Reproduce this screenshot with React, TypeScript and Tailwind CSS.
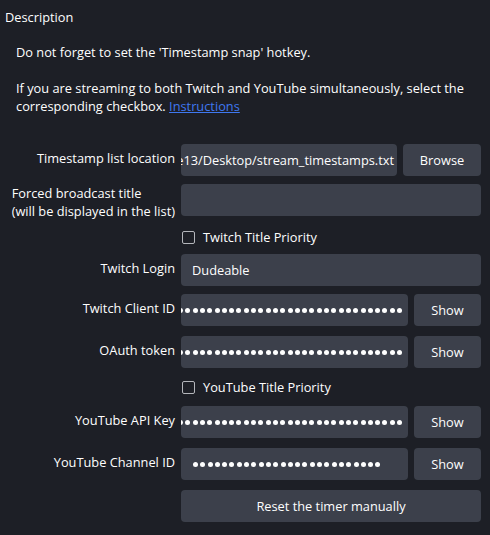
const dots = (n: number) =>
  Array.from({ length: n }, (_, i) => (
    <span key={i} className="h-[5px] w-[5px] shrink-0 rounded-full bg-[#fefefe]" />
  ));

function Label({ children }: { children: React.ReactNode }) {
  return <div className="flex justify-end whitespace-nowrap pt-[5px]">{children}</div>;
}

function Masked({ count, end = true }: { count: number; end?: boolean }) {
  return (
    <div
      className={`flex h-8 min-w-0 flex-1 items-center gap-[2.3px] overflow-hidden rounded bg-[#3c404b] ${
        end ? 'justify-end pr-[6px]' : 'pl-[12px]'
      }`}
    >
      {dots(count)}
    </div>
  );
}

function Button({ children, className = '' }: { children: React.ReactNode; className?: string }) {
  return (
    <button className={`flex h-8 shrink-0 items-center justify-center rounded bg-[#3c404b] text-[#fefefe] ${className}`}>
      {children}
    </button>
  );
}

function Check({ label }: { label: string }) {
  return (
    <div className="flex h-[22px] items-center">
      <span className="ml-px h-[13px] w-[13px] rounded-[2px] border border-[#b4b6bb]" />
      <span className="ml-[8px]">{label}</span>
    </div>
  );
}

export default function App() {
  return (
    <div
      className="h-[535px] w-[490px] overflow-hidden bg-[#1d1f26] text-[12.8px] leading-[18px] text-[#fefefe]"
      style={{ fontFamily: '"Open Sans", "Liberation Sans", sans-serif' }}
    >
      <p className="pl-[5px] pt-[8px]">Description</p>

      <div className="pl-[16px] pt-[17px]">
        <p>Do not forget to set the 'Timestamp snap' hotkey.</p>
        <p className="mt-[18px] pr-[8px]">
          If you are streaming to both Twitch and YouTube simultaneously, select the corresponding checkbox.{' '}
          <a href="#" className="text-[#3f78f0] underline">
            Instructions
          </a>
        </p>
      </div>

      <div className="mt-[29px] grid grid-cols-[175px_minmax(0,1fr)] gap-x-[6px] pr-[9px]">
        <Label>Timestamp list location</Label>
        <div className="flex gap-[6px]">
          <div className="flex h-8 min-w-0 flex-1 items-center justify-end overflow-hidden whitespace-nowrap rounded bg-[#3c404b] pr-[3px]">
            C:/Users/Dude13/Desktop/stream_timestamps.txt
          </div>
          <Button className="w-[78px]">Browse</Button>
        </div>

        <div className="mt-[8px] flex h-8 justify-end">
          <div className="whitespace-nowrap">
            Forced broadcast title
            <br />
            (will be displayed in the list)
          </div>
        </div>
        <div className="mt-[8px] h-8 rounded bg-[#3c404b]" />

        <div />
        <div className="mt-[10px]">
          <Check label="Twitch Title Priority" />
        </div>

        <div className="mt-[6px]">
          <Label>Twitch Login</Label>
        </div>
        <div className="mt-[6px] flex h-8 items-center rounded bg-[#3c404b] pl-[11px]">Dudeable</div>

        <div className="mt-[8px]">
          <Label>Twitch Client ID</Label>
        </div>
        <div className="mt-[8px] flex gap-[6px]">
          <Masked count={31} />
          <Button className="w-[67px]">Show</Button>
        </div>

        <div className="mt-[10px]">
          <Label>OAuth token</Label>
        </div>
        <div className="mt-[10px] flex gap-[6px]">
          <Masked count={31} />
          <Button className="w-[67px]">Show</Button>
        </div>

        <div />
        <div className="mt-[8px]">
          <Check label="YouTube Title Priority" />
        </div>

        <div className="mt-[8px]">
          <Label>YouTube API Key</Label>
        </div>
        <div className="mt-[8px] flex gap-[6px]">
          <Masked count={31} />
          <Button className="w-[67px]">Show</Button>
        </div>

        <div className="mt-[10px]">
          <Label>YouTube Channel ID</Label>
        </div>
        <div className="mt-[10px] flex gap-[6px]">
          <Masked count={26} end={false} />
          <Button className="w-[67px]">Show</Button>
        </div>

        <div />
        <Button className="mt-[10px] w-full">Reset the timer manually</Button>
      </div>
    </div>
  );
}
